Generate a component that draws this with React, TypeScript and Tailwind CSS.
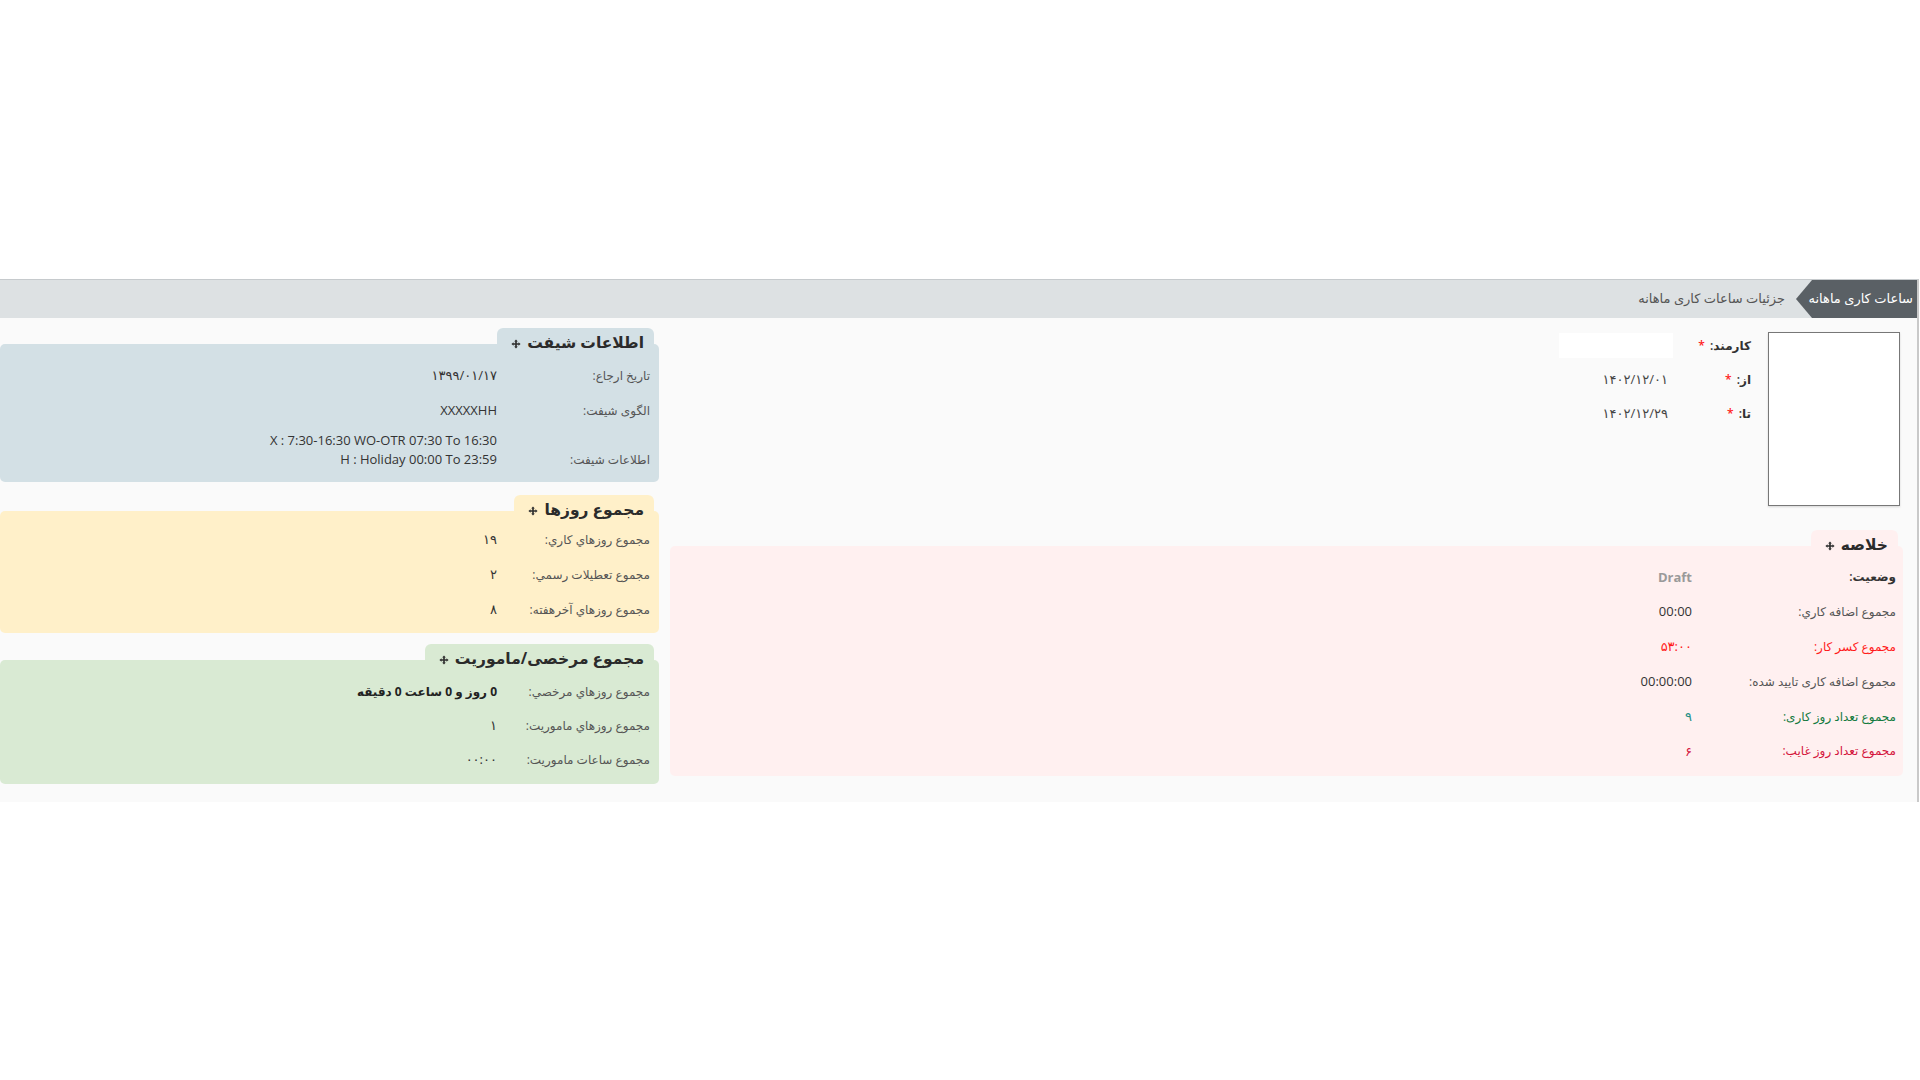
import React from 'react';

type Row = {
  label: React.ReactNode;
  value: React.ReactNode;
  labelClass?: string;
  valueClass?: string;
};

// آیکن کوچک جابجایی کنار عنوان پنل‌ها
function MoveIcon() {
  return (
    <svg width="10" height="10" viewBox="0 0 12 12" className="shrink-0">
      <path
        d="M6 0.5 L8.2 3 H7 V5 H9 V3.8 L11.5 6 L9 8.2 V7 H7 V9 H8.2 L6 11.5 L3.8 9 H5 V7 H3 V8.2 L0.5 6 L3 3.8 V5 H5 V3 H3.8 Z"
        fill="#2f2f2f"
      />
    </svg>
  );
}

interface PanelProps {
  title: string;
  bg: string;
  bodyClass: string;
  children: React.ReactNode;
}

function Panel({ title, bg, bodyClass, children }: PanelProps) {
  return (
    <div>
      <div
        className={`relative z-10 mr-[5px] flex h-[30px] w-fit items-start gap-[6px] rounded-t-[6px] pl-[14px] pr-[10px] pt-[1px] ${bg}`}
      >
        <span className="text-[15.5px] font-bold leading-[26px] text-[#2b2b2b]">{title}</span>
        <span className="pt-[10px]">
          <MoveIcon />
        </span>
      </div>
      <div className={`-mt-[14px] rounded-[5px] ${bg} ${bodyClass}`}>{children}</div>
    </div>
  );
}

function Rows({ rows, labelWidth, rowHeight, pr }: { rows: Row[]; labelWidth: string; rowHeight: string; pr: string }) {
  return (
    <div className={pr}>
      {rows.map((r, i) => (
        <div key={i} className={`flex items-center ${rowHeight}`}>
          <div className={`${labelWidth} shrink-0 ${r.labelClass ?? 'text-[#555]'}`}>{r.label}</div>
          <div className={r.valueClass ?? 'text-[13px] text-[#333]'}>{r.value}</div>
        </div>
      ))}
    </div>
  );
}

const daysRows: Row[] = [
  { label: 'مجموع روزهاي كاري:', value: '۱۹' },
  { label: 'مجموع تعطيلات رسمي:', value: '۲' },
  { label: 'مجموع روزهاي آخرهفته:', value: '۸' },
];

const leaveRows: Row[] = [
  { label: 'مجموع روزهاي مرخصي:', value: '0 روز و 0 ساعت 0 دقيقه', valueClass: 'text-[12px] font-bold text-[#222]' },
  { label: 'مجموع روزهاي ماموريت:', value: '۱' },
  { label: 'مجموع ساعات ماموريت:', value: '۰۰:۰۰' },
];

const summaryRows: Row[] = [
  { label: 'وضعیت:', value: 'Draft', labelClass: 'text-[#333] font-semibold', valueClass: 'text-[13px] font-bold text-[#9a9a9a]' },
  { label: 'مجموع اضافه كاري:', value: '00:00' },
  { label: 'مجموع کسر کار:', value: '۵۳:۰۰', labelClass: 'text-[#ff1a1a]', valueClass: 'text-[13px] text-[#ff1a1a]' },
  { label: 'مجموع اضافه کاری تایید شده:', value: '00:00:00' },
  { label: 'مجموع تعداد روز کاری:', value: '۹', labelClass: 'text-[#137a3e]', valueClass: 'text-[13px] text-[#1f8f86]' },
  { label: 'مجموع تعداد روز غایب:', value: '۶', labelClass: 'text-[#d4143c]', valueClass: 'text-[13px] text-[#d4143c]' },
];

export default function App() {
  return (
    <div dir="rtl" className="min-h-screen bg-white font-['Open_Sans','DejaVu_Sans',sans-serif] text-[12px]">
      <div className="h-[279px]" />

      <div className="mr-auto w-[1919px] border-r-2 border-t border-r-[#c9c9c9] border-t-[#c6cacd]">
        {/* نوار مسیر */}
        <div className="flex h-[38px] items-center bg-[#dde1e3]">
          <div className="flex h-full w-[121px] items-center justify-start bg-[#5a6065] pr-[4px] text-[13px] text-white [clip-path:polygon(100%_0,100%_100%,16px_100%,0_50%,16px_0)]">
            ساعات کاری ماهانه
          </div>
          <div className="mr-[11px] text-[13px] text-[#555]">جزئیات ساعات کاری ماهانه</div>
        </div>

        {/* محتوا */}
        <div className="flex items-start gap-[11px] bg-[#fafafa] pb-[18px] pr-[14px]">
          {/* ستون راست */}
          <div className="w-[1233px] pt-[14px]">
            <div className="flex items-start">
              <div className="mr-[3px] h-[174px] w-[132px] shrink-0 border border-[#777] bg-white shadow-[0_1px_2px_rgba(0,0,0,0.15)]" />
              <div className="mr-[17px] flex flex-col gap-[8px]">
                <div className="flex h-[27px] items-center">
                  <div className="w-[78px] font-semibold text-[#333]">
                    کارمند: <span className="mr-[2px] text-[#ff2020]">*</span>
                  </div>
                  <div className="h-[25px] w-[114px] bg-white" />
                </div>
                <div className="flex h-[26px] items-center">
                  <div className="w-[78px] font-semibold text-[#333]">
                    از: <span className="mr-[2px] text-[#ff2020]">*</span>
                  </div>
                  <div className="pr-[5px] text-[13px] text-[#444]">۱۴۰۲/۱۲/۰۱</div>
                </div>
                <div className="flex h-[26px] items-center">
                  <div className="w-[78px] font-semibold text-[#333]">
                    تا: <span className="mr-[2px] text-[#ff2020]">*</span>
                  </div>
                  <div className="pr-[5px] text-[13px] text-[#444]">۱۴۰۲/۱۲/۲۹</div>
                </div>
              </div>
            </div>

            <div className="mt-[24px]">
              <Panel title="خلاصه" bg="bg-[#fff0f0]" bodyClass="pt-[14px] pb-[7px]">
                <Rows rows={summaryRows} labelWidth="w-[204px]" rowHeight="h-[34.8px]" pr="pr-[7px]" />
              </Panel>
            </div>
          </div>

          {/* ستون چپ */}
          <div className="flex w-[659px] flex-col pt-[10px]">
            <Panel title="اطلاعات شیفت" bg="bg-[#d3e0e5]" bodyClass="pt-[14px] pb-[13px] pr-[9px]">
              <div className="flex h-[35px] items-center">
                <div className="w-[153px] shrink-0 text-[#555]">تاریخ ارجاع:</div>
                <div className="text-[13px] text-[#333]">۱۳۹۹/۰۱/۱۷</div>
              </div>
              <div className="flex h-[35px] items-center">
                <div className="w-[153px] shrink-0 text-[#555]">الگوی شیفت:</div>
                <div className="text-[13px] text-[#333]">XXXXXHH</div>
              </div>
              <div className="flex items-end pt-[3px] leading-[19px]">
                <div className="w-[153px] shrink-0 text-[#555]">اطلاعات شیفت:</div>
                <div className="text-[13px] text-[#333]">
                  <div dir="ltr" className="text-right">X : 7:30-16:30 WO-OTR 07:30 To 16:30</div>
                  <div dir="ltr" className="text-right">H : Holiday 00:00 To 23:59</div>
                </div>
              </div>
            </Panel>

            <div className="mt-[13px]">
              <Panel title="مجموع روزها" bg="bg-[#fff0c9]" bodyClass="pt-[11px] pb-[6px]">
                <Rows rows={daysRows} labelWidth="w-[153px]" rowHeight="h-[35px]" pr="pr-[9px]" />
              </Panel>
            </div>

            <div className="mt-[11px]">
              <Panel title="مجموع مرخصی/ماموریت" bg="bg-[#d9ead3]" bodyClass="pt-[15px] pb-[7px]">
                <Rows rows={leaveRows} labelWidth="w-[153px]" rowHeight="h-[34px]" pr="pr-[9px]" />
              </Panel>
            </div>
          </div>
        </div>
      </div>
    </div>
  );
}
